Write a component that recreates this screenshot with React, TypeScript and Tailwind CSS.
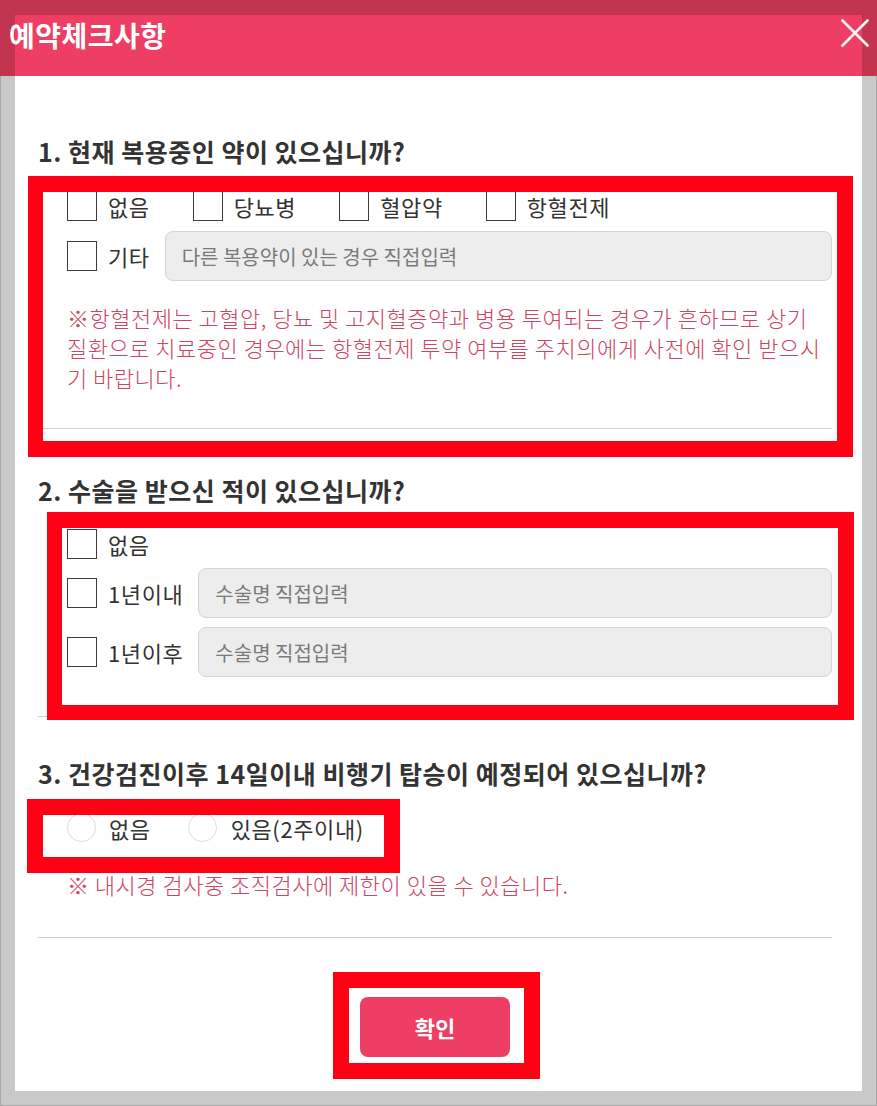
import React from "react";

const font = { fontFamily: '"Noto Sans CJK KR", "Noto Sans", sans-serif' };

const Checkbox = () => (
  <span className="block w-[30px] h-[30px] shrink-0 border border-[#3c3c3c] bg-white" />
);

const Radio = () => (
  <span className="block w-[29px] h-[29px] shrink-0 rounded-full border border-[#dcdcdc] bg-white" />
);

const TextField = ({ placeholder }: { placeholder: string }) => (
  <input
    readOnly
    placeholder={placeholder}
    className="flex-1 min-w-0 h-[50px] rounded-[8px] border border-[#d4d4d4] bg-[#ededed] pl-[16px] text-[20px] text-[#333] placeholder:text-[#7a7a7a] outline-none"
    style={font}
  />
);

const Label = ({ children }: { children: React.ReactNode }) => (
  <span className="ml-[11px] text-[22px] leading-none tracking-[0.6px] text-[#333]">{children}</span>
);

const Heading = ({ children, className = "" }: { children: React.ReactNode; className?: string }) => (
  <h2 className={`text-[25px] leading-[30px] font-bold tracking-[0.5px] text-[#333] ${className}`}>{children}</h2>
);

const Divider = ({ className = "" }: { className?: string }) => (
  <div className={`h-px bg-[#cfcfcf] ${className}`} />
);

// red annotation frames drawn over the form
const Mark = ({ className }: { className: string }) => (
  <div className={`absolute border-[16px] border-[#ff0015] pointer-events-none ${className}`} />
);

export default function App() {
  const medicines = ["없음", "당뇨병", "혈압약", "항혈전제"];

  return (
    <div
      className="relative w-[877px] h-[1106px] flex flex-col bg-[#c9c9c9] shadow-[inset_0_0_0_1px_#a8a8a8] overflow-hidden"
      style={font}
    >
      {/* Header */}
      <div className="relative h-[76px] shrink-0 bg-[#c2344f]">
        <div className="absolute left-[15px] right-[15px] top-[15px] bottom-0 bg-[#ef3e63]" />
        <div className="relative flex items-start justify-between pl-[9px] pr-[8px] pt-[20px]">
          <h1 className="text-[28px] leading-[30px] font-bold text-white tracking-[0.5px]">예약체크사항</h1>
          <svg width="28" height="28" viewBox="0 0 28 28" className="-mt-[1px]">
            <path d="M1.5 1.5 L26.5 26.5 M26.5 1.5 L1.5 26.5" stroke="#f4f4f4" strokeWidth="2.6" strokeLinecap="round" />
          </svg>
        </div>
      </div>

      {/* Body */}
      <div className="flex-1 mx-[15px] mb-[15px] bg-white pl-[23px] pr-[30px] pt-[60px]">
        {/* 1 */}
        <Heading>1. 현재 복용중인 약이 있으십니까?</Heading>
        <div className="mt-[25px] pl-[29px] flex flex-col gap-[10px]">
          <div className="flex items-center">
            {medicines.map((m) => (
              <label key={m} className="flex items-center mr-[43px]">
                <Checkbox />
                <Label>{m}</Label>
              </label>
            ))}
          </div>
          <div className="flex items-center">
            <Checkbox />
            <Label>기타</Label>
            <div className="ml-[15px] flex-1 flex">
              <TextField placeholder="다른 복용약이 있는 경우 직접입력" />
            </div>
          </div>
        </div>
        <p className="mt-[21px] pl-[29px] text-[22px] leading-[30px] tracking-[0.5px] font-light text-[#cc4562] whitespace-nowrap">
          ※항혈전제는 고혈압, 당뇨 및 고지혈증약과 병용 투여되는 경우가 흔하므로 상기
          <br />
          질환으로 치료중인 경우에는 항혈전제 투약 여부를 주치의에게 사전에 확인 받으시
          <br />
          기 바랍니다.
        </p>
        <Divider className="mt-[36px]" />

        {/* 2 */}
        <Heading className="mt-[46px]">2. 수술을 받으신 적이 있으십니까?</Heading>
        <div className="mt-[24px] pl-[29px] flex flex-col gap-[9px]">
          <label className="flex items-center">
            <Checkbox />
            <Label>없음</Label>
          </label>
          {["1년이내", "1년이후"].map((t) => (
            <div key={t} className="flex items-center">
              <Checkbox />
              <Label>{t}</Label>
              <div className="ml-[15px] flex-1 flex">
                <TextField placeholder="수술명 직접입력" />
              </div>
            </div>
          ))}
        </div>
        <Divider className="mt-[39px]" />

        {/* 3 */}
        <Heading className="mt-[41px]">3. 건강검진이후 14일이내 비행기 탑승이 예정되어 있으십니까?</Heading>
        <div className="mt-[25px] pl-[29px] flex items-center">
          <label className="flex items-center mr-[37px]">
            <Radio />
            <span className="ml-[13px] text-[22px] leading-none tracking-[0.6px] text-[#333]">없음</span>
          </label>
          <label className="flex items-center">
            <Radio />
            <span className="ml-[14px] text-[22px] leading-none tracking-[0.6px] text-[#333]">있음(2주이내)</span>
          </label>
        </div>
        <p className="mt-[27px] pl-[29px] text-[22px] leading-[30px] tracking-[0.5px] font-light text-[#cc4562]">
          ※ 내시경 검사중 조직검사에 제한이 있을 수 있습니다.
        </p>
        <Divider className="mt-[38px]" />

        <div className="mt-[59px] flex justify-center">
          <button className="w-[150px] h-[60px] rounded-[8px] bg-[#ee3e63] text-white text-[22px] font-bold">
            확인
          </button>
        </div>
      </div>

      {/* annotation frames */}
      <Mark className="left-[28px] top-[176px] w-[825px] h-[281px] border-l-[15px]" />
      <Mark className="left-[47px] top-[512px] w-[807px] h-[208px] border-b-[15px] border-l-[15px]" />
      <Mark className="left-[27px] top-[799px] w-[373px] h-[74px]" />
      <Mark className="left-[333px] top-[972px] w-[207px] h-[107px]" />
    </div>
  );
}
